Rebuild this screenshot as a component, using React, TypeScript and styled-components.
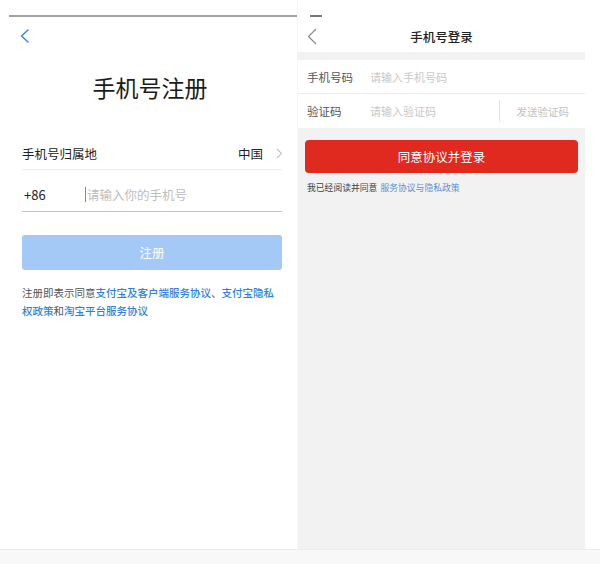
import React from "react";
import styled, { createGlobalStyle } from "styled-components";

const Global = createGlobalStyle`
  html, body { margin: 0; padding: 0; background: #fff; }
  body { font-family: "Noto Sans CJK SC", "Noto Sans", sans-serif; }
  * { box-sizing: border-box; }
`;

const Page = styled.div`
  width: 600px;
  height: 564px;
  display: flex;
  flex-direction: column;
  background: #fff;
  overflow: hidden;
`;

const Screens = styled.div`
  display: flex;
  height: 549px;
`;

const BottomStrip = styled.div`
  flex: 1;
  background: #f8f8f8;
  border-top: 1px solid #ececec;
`;

/* ---------- left screen ---------- */
const LeftScreen = styled.div`
  width: 298px;
  display: flex;
  flex-direction: column;
  background: #fff;
  border-right: 1px solid #f6f6f6;
`;

const StatusLine = styled.div`
  margin: 15px 0 0 9px;
  height: 2px;
  background: #a3a3a3;
`;

const BackRow = styled.div`
  margin: 12px 0 0 20px;
  height: 14px;
  display: flex;
`;

const BigTitle = styled.h1`
  margin: 29px 0 0;
  padding-left: 3px;
  font-size: 23px;
  line-height: 30px;
  font-weight: 400;
  text-align: center;
  color: #1c1c1c;
`;

const Form = styled.div`
  padding: 0 15px 0 22px;
  display: flex;
  flex-direction: column;
`;

const RegionRow = styled.div`
  margin-top: 35px;
  height: 33px;
  border-bottom: 1px solid #ededed;
  display: flex;
  align-items: center;
  justify-content: space-between;
  font-size: 12.5px;
  color: #222;
`;

const RegionValue = styled.div`
  display: flex;
  align-items: center;
  gap: 13px;
`;

const PhoneRow = styled.div`
  padding-top: 8px;
  height: 42px;
  border-bottom: 1px solid #a3cdec;
  display: flex;
  align-items: center;
  font-size: 12.5px;
`;

const CountryCode = styled.span`
  width: 63px;
  padding-left: 2px;
  font-size: 13px;
  color: #222;
`;

const Caret = styled.span`
  width: 1px;
  height: 15px;
  background: #8a8a8a;
  margin-right: 1px;
`;

const Placeholder = styled.span`
  color: #bdbdbd;
  font-size: 12.5px;
`;

const RegisterButton = styled.div`
  margin-top: 23px;
  height: 35px;
  border-radius: 3px;
  background: #a5c9f7;
  color: #fff;
  font-size: 12.5px;
  display: flex;
  align-items: center;
  justify-content: center;
`;

const Terms = styled.p`
  margin: 14px 0 0;
  font-size: 10.5px;
  line-height: 18px;
  color: #555;
`;

const Link = styled.span<{ $color: string }>`
  color: ${(p) => p.$color};
  font-weight: 500;
`;

/* ---------- right screen ---------- */
const RightScreen = styled.div`
  width: 287px;
  display: flex;
  flex-direction: column;
  background: #f2f2f2;
`;

const Header = styled.div`
  background: #fff;
  height: 52px;
  padding-top: 15px;
  display: flex;
  flex-direction: column;
`;

const StatusMark = styled.div`
  margin-left: 12px;
  width: 12px;
  height: 1.5px;
  background: #777;
`;

const NavBar = styled.div`
  margin-top: 10px;
  height: 18px;
  display: grid;
  grid-template-columns: 40px 1fr 40px;
  align-items: center;
`;

const NavBack = styled.div`
  padding-left: 9px;
  display: flex;
  align-items: center;
`;

const NavTitle = styled.div`
  text-align: center;
  font-size: 12.5px;
  font-weight: 500;
  color: #222;
`;

const Fields = styled.div`
  margin-top: 8px;
  background: #fff;
  display: flex;
  flex-direction: column;
`;

const FieldRow = styled.div<{ $divider?: boolean }>`
  height: 34px;
  display: flex;
  align-items: center;
  border-bottom: ${(p) => (p.$divider ? "1px solid #ebebeb" : "none")};
`;

const FieldLabel = styled.span`
  width: 72px;
  padding-left: 9px;
  font-size: 11.5px;
  color: #555;
`;

const FieldInput = styled.span`
  flex: 1;
  font-size: 11px;
  color: #c8c8c8;
`;

const VDivider = styled.span`
  width: 1px;
  height: 22px;
  background: #e4e4e4;
`;

const SendCode = styled.span`
  margin-left: 17px;
  padding-right: 16px;
  font-size: 10.5px;
  color: #c2c2c2;
`;

const LoginButton = styled.div`
  margin: 12px 7px 0;
  height: 33px;
  border-radius: 4px;
  background: #e0291f;
  color: #fff;
  font-size: 12.5px;
  display: flex;
  align-items: center;
  justify-content: center;
`;

const Agreement = styled.p`
  margin: 9px 0 0 9px;
  font-size: 8.8px;
  line-height: 12px;
  color: #444;
`;

const AgreeLink = styled.span`
  margin-left: 3px;
  color: #5a8fd6;
`;

export default function App() {
  return (
    <Page>
      <Global />
      <Screens>
        <LeftScreen>
          <StatusLine />
          <BackRow>
            <svg width="9" height="14" viewBox="0 0 9 14">
              <path d="M8 1 L1.5 7 L8 13" fill="none" stroke="#3f8be0" strokeWidth="1.6" strokeLinecap="round" strokeLinejoin="round" />
            </svg>
          </BackRow>
          <BigTitle>手机号注册</BigTitle>
          <Form>
            <RegionRow>
              <span>手机号归属地</span>
              <RegionValue>
                <span>中国</span>
                <svg width="6" height="11" viewBox="0 0 6 11">
                  <path d="M1 1 L5.5 5.5 L1 10" fill="none" stroke="#c4c4c4" strokeWidth="1.2" />
                </svg>
              </RegionValue>
            </RegionRow>
            <PhoneRow>
              <CountryCode>+86</CountryCode>
              <Caret />
              <Placeholder>请输入你的手机号</Placeholder>
            </PhoneRow>
            <RegisterButton>注册</RegisterButton>
            <Terms>
              注册即表示同意<Link $color="#2f7fe0">支付宝及客户端服务协议、支付宝隐私</Link>
              <Link $color="#2f7fe0">权政策</Link>和<Link $color="#2f7fe0">淘宝平台服务协议</Link>
            </Terms>
          </Form>
        </LeftScreen>
        <RightScreen>
          <Header>
            <StatusMark />
            <NavBar>
              <NavBack>
                <svg width="10" height="17" viewBox="0 0 10 17">
                  <path d="M9 1 L1.5 8.5 L9 16" fill="none" stroke="#8a8a8a" strokeWidth="1.2" />
                </svg>
              </NavBack>
              <NavTitle>手机号登录</NavTitle>
              <span />
            </NavBar>
          </Header>
          <Fields>
            <FieldRow $divider>
              <FieldLabel>手机号码</FieldLabel>
              <FieldInput>请输入手机号码</FieldInput>
            </FieldRow>
            <FieldRow>
              <FieldLabel>验证码</FieldLabel>
              <FieldInput>请输入验证码</FieldInput>
              <VDivider />
              <SendCode>发送验证码</SendCode>
            </FieldRow>
          </Fields>
          <LoginButton>同意协议并登录</LoginButton>
          <Agreement>
            我已经阅读并同意<AgreeLink>服务协议与隐私政策</AgreeLink>
          </Agreement>
        </RightScreen>
      </Screens>
      <BottomStrip />
    </Page>
  );
}
